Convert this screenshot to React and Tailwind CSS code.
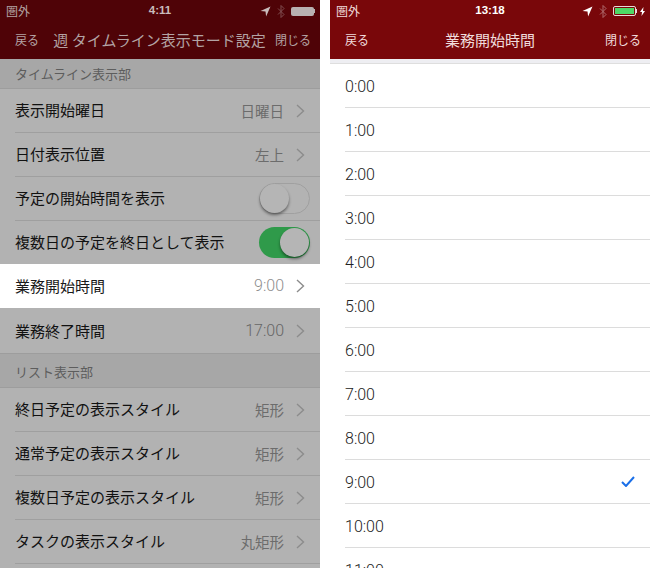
import React from "react";

const JP = { fontFamily: '"Noto Sans CJK JP", "Noto Sans", sans-serif' };
const NUM = { fontFamily: 'Roboto, sans-serif' };

const Chevron = () => (
  <svg width="9" height="14" viewBox="0 0 9 14" fill="none" className="ml-[12px] mr-[15px] shrink-0">
    <path d="M1 1l6.5 6L1 13" stroke="#8c8c8c" strokeWidth="1.4" />
  </svg>
);

const StatusIcons = ({ fill, battery }) => (
  <div className="flex items-center">
    <svg width="11" height="11" viewBox="0 0 11 11" className="mr-[6px]">
      <path d="M10.5.5L.5 5l5 .6.6 5z" fill={fill} />
    </svg>
    <svg width="8" height="13" viewBox="0 0 8 13" fill="none" className="mr-[6px] opacity-40">
      <path d="M1 3.5l6 6-3 3V.5l3 3-6 6" stroke={fill} strokeWidth="1" />
    </svg>
    {battery}
  </div>
);

const Toggle = ({ on }) => (
  <div
    className={`relative w-[51px] h-[31px] rounded-full ${
      on ? "bg-[#2f9a4a]" : "border border-[#a0a0a0] bg-[#b3b3b3]"
    }`}
  >
    <div
      className={`absolute w-[29px] h-[29px] rounded-full bg-[#b5b5b5] shadow-[0_2px_3px_rgba(0,0,0,0.45)] ${
        on ? "right-[1px] top-[1px]" : "left-0 top-0"
      }`}
    />
  </div>
);

const Section = ({ title, h }) => (
  <div className={`${h} flex items-center pl-[15px] bg-[#a7a7a7] border-b border-[#9d9d9d] text-[13px] text-[#5d5d5d]`}>
    {title}
  </div>
);

const Row = ({ label, value, toggle, active, last, numeric, h = "h-11" }) => (
  <div className={`${h} flex ${active ? "bg-white" : "bg-[#b2b2b2]"}`}>
    <div className={`flex-1 flex items-center ml-[15px] ${last ? "" : "border-b border-[#9f9f9f]"}`}>
      <span className={`flex-1 text-[15px] ${active ? "text-[#1a1a1a]" : "text-[#111111]"}`}>{label}</span>
      {toggle === undefined ? (
        <>
          {numeric ? (
            <span className={`text-[16px] font-light ${active ? "text-[#8e8e8e]" : "text-[#666666]"}`} style={NUM}>
              {value}
            </span>
          ) : (
            <span className="text-[14.5px] text-[#6c6c6c]">{value}</span>
          )}
          <Chevron />
        </>
      ) : (
        <div className="mr-[10px]">
          <Toggle on={toggle} />
        </div>
      )}
    </div>
  </div>
);

const NavBar = ({ bg, status, time, title, titleClass, textClass, icons, closeClass, backClass, timeClass }) => (
  <div className={`h-[59px] shrink-0 ${bg}`}>
    <div className="h-[22px] relative flex items-center justify-between pl-[6px] pr-[2px]">
      <span className={`text-[12px] ${textClass}`}>{status}</span>
      <span className={`absolute left-0 right-0 text-center text-[11.5px] font-semibold ${timeClass}`} style={{ fontFamily: '"Liberation Sans", sans-serif' }}>
        {time}
      </span>
      {icons}
    </div>
    <div className="h-[36px] flex items-center">
      <span className={`text-[12px] ${backClass} ${textClass}`}>戻る</span>
      <span className={`flex-1 text-center text-[15px] whitespace-nowrap ${titleClass}`}>{title}</span>
      <span className={`text-[12px] ${closeClass} ${textClass}`}>閉じる</span>
    </div>
  </div>
);

const hours = ["0:00", "1:00", "2:00", "3:00", "4:00", "5:00", "6:00", "7:00", "8:00", "9:00", "10:00", "11:00"];

export default function App() {
  return (
    <div className="flex w-[650px] h-[568px] overflow-hidden bg-white" style={JP}>
      {/* 左: 設定画面（暗転） */}
      <div className="w-[320px] h-[568px] overflow-hidden flex flex-col bg-[#b2b2b2]">
        <NavBar
          bg="bg-[#4f0307]"
          status="圏外"
          time="4:11"
          title="週 タイムライン表示モード設定"
          titleClass="pl-[5px] text-[#b3a3a4]"
          textClass="text-[#b3a3a4]"
          timeClass="text-[#c9bcbc]"
          backClass="ml-[15px]"
          closeClass="mr-[9px]"
          icons={
            <StatusIcons
              fill="#c9bcbc"
              battery={
                <div className="flex items-center mr-[3px]">
                  <div className="w-[23px] h-[9px] rounded-[2px] bg-[#b8b1b1]" />
                  <div className="w-[1.5px] h-1 bg-[#b8b1b1]" />
                </div>
              }
            />
          }
        />
        <Section title="タイムライン表示部" h="h-[30px]" />
        <Row label="表示開始曜日" value="日曜日" />
        <Row label="日付表示位置" value="左上" />
        <Row label="予定の開始時間を表示" toggle={false} />
        <Row label="複数日の予定を終日として表示" toggle={true} last h="h-[43px]" />
        <Row label="業務開始時間" value="9:00" numeric active last />
        <Row label="業務終了時間" value="17:00" numeric last h="h-[45px] pt-[1px]" />
        <Section title="リスト表示部" h="h-[35px] border-t pt-[2px]" />
        <Row label="終日予定の表示スタイル" value="矩形" />
        <Row label="通常予定の表示スタイル" value="矩形" />
        <Row label="複数日予定の表示スタイル" value="矩形" />
        <Row label="タスクの表示スタイル" value="丸矩形" />
      </div>

      <div className="w-[10px] shrink-0" />

      {/* 右: 業務開始時間の選択 */}
      <div className="w-[320px] h-[568px] overflow-hidden flex flex-col">
        <NavBar
          bg="bg-[#79070a]"
          status="圏外"
          time="13:18"
          title="業務開始時間"
          titleClass="text-[#f0dcdc]"
          textClass="text-[#f0dcdc]"
          timeClass="text-white"
          backClass="ml-[15px] w-[36px]"
          closeClass="mr-[9px] w-[42px] text-right"
          icons={
            <StatusIcons
              fill="#ffffff"
              battery={
                <div className="flex items-center">
                  <div className="w-[23px] h-[10px] rounded-[2px] border border-[#e9d9d9] p-[1px]">
                    <div className="w-full h-full bg-[#4cd964]" />
                  </div>
                  <div className="w-[1.5px] h-1 bg-[#e9d9d9] mr-[3px]" />
                  <svg width="5" height="9" viewBox="0 0 5 9" className="mr-[3px]">
                    <path d="M3.5 0L0 5h2L1.5 9 5 4H3z" fill="#ffffff" />
                  </svg>
                </div>
              }
            />
          }
        />
        <div className="h-[5px] shrink-0 bg-[#eeeef2] border-b border-[#dedede]" />
        {hours.map((h) => (
          <div key={h} className="h-11 shrink-0 flex">
            <div className="flex-1 flex items-center justify-between ml-[15px] border-b border-[#dcdcdc]">
              <span className="pt-0.5 text-[16px] text-[#222222] font-light" style={NUM}>
                {h}
              </span>
              {h === "9:00" && (
                <svg width="14" height="11" viewBox="0 0 14 11" fill="none" className="mr-[15px]">
                  <path d="M1 6l4 4 8-9" stroke="#1a6fe8" strokeWidth="2" />
                </svg>
              )}
            </div>
          </div>
        ))}
      </div>
    </div>
  );
}
